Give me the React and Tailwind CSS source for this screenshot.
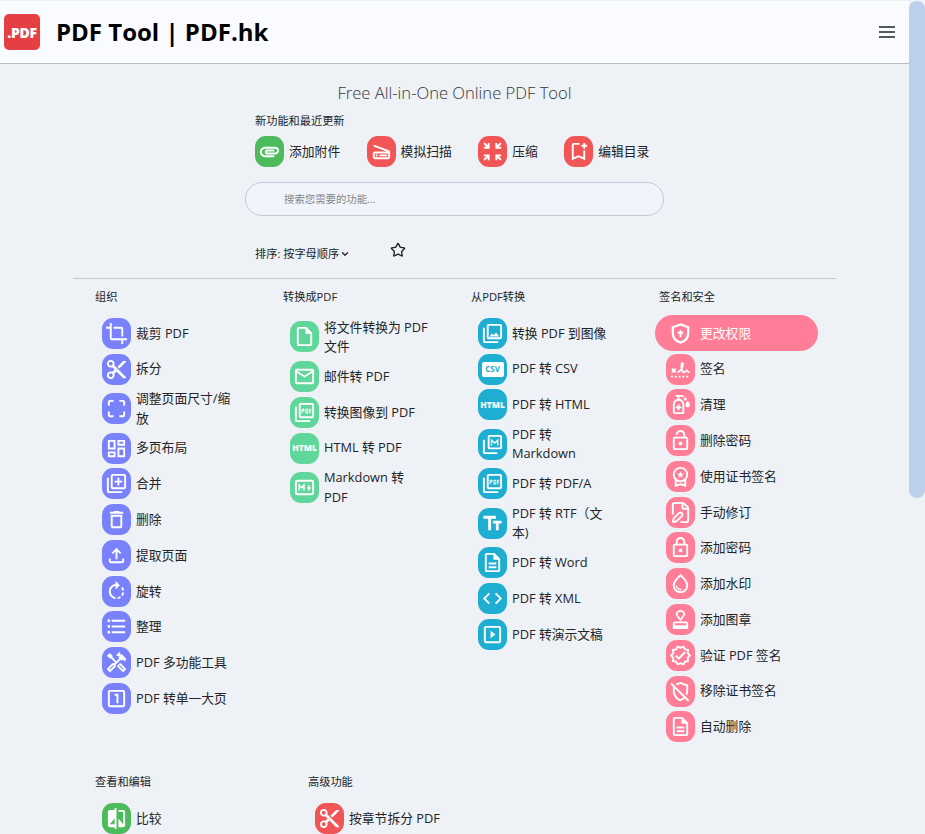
import React from "react";
import {
  MdAttachment, MdOutlineScanner, MdOutlineZoomInMap, MdOutlineBookmarkAdd,
  MdCrop, MdContentCut, MdOutlineCropFree, MdOutlineDashboard, MdOutlineLibraryAdd, MdOutlineDelete,
  MdOutlineFileUpload, MdRotateRight, MdOutlineFormatListBulleted, MdOutlineHandyman, MdOutlineLooksOne,
  MdOutlineInsertDriveFile, MdOutlineEmail, MdOutlinePictureAsPdf,
  MdOutlinePhotoLibrary, MdOutlineTextFields, MdOutlineDescription, MdOutlineCode, MdOutlineSlideshow,
  MdOutlineSanitizer, MdOutlineLockOpen, MdOutlineWorkspacePremium, MdOutlineLock, MdOutlineWaterDrop,
  MdOutlineApproval, MdOutlineVerified, MdOutlineRemoveModerator, MdCompare,
} from "react-icons/md";
import { FilePen, Star, ChevronDown } from "lucide-react";

const ShieldUp = ({ size }) => (
  <svg width={size} height={size} viewBox="0 0 24 24" fill="none" stroke="currentColor" strokeWidth="2.4">
    <path d="M12 2.500l8 3v6c0 4.800-3.400 8.600-8 10-4.600-1.400-8-5.200-8-10v-6z" />
    <path d="M12 16v-6M9.500 12.200L12 9.500l2.500 2.700" strokeWidth="2" />
  </svg>
);

const Signature = ({ size }) => (
  <svg width={size} height={size} viewBox="0 0 24 24" fill="none" stroke="currentColor" strokeWidth="1.800">
    <path d="M3 11l4 4M7 11l-4 4" />
    <path d="M9 15c2-1 5-4 5.500-7.500C15 5 13.500 4 13 6.500c-.5 3 .5 8.500 2.500 8.500 1.500 0 1.500-2 3-2 1 0 1 2 3 2" />
    <path d="M2 19.500h20" strokeDasharray="2 2" />
  </svg>
);

const MarkdownBox = ({ size }) => (
  <svg width={size} height={size} viewBox="0 0 24 24" fill="none" stroke="currentColor" strokeWidth="2">
    <rect x="3" y="5" width="18" height="14" rx="1.500" />
    <path d="M6.500 15V9.500l2.500 3 2.500-3V15" strokeWidth="1.500" />
    <path d="M16.500 9.500V15M14.500 12.500h4" strokeWidth="1.500" />
  </svg>
);

const StackedM = ({ size }) => (
  <svg width={size} height={size} viewBox="0 0 24 24" fill="none" stroke="currentColor" strokeWidth="2">
    <rect x="8" y="3" width="13" height="13" rx="1" />
    <path d="M3 7v13a1 1 0 001 1h13" />
    <path d="M11 13V7.500l3.500 3 3-3V13" strokeWidth="1.400" />
  </svg>
);

const CsvBox = () => (
  <span className="flex h-[15px] w-[22px] items-center justify-center rounded-[2px] bg-white text-[8px] font-bold leading-none text-[#1eaed2]">
    CSV
  </span>
);

const HtmlWord = () => <span className="text-[8.5px] font-extrabold leading-none">HTML</span>;

const ORGANIZE = [
  { label: "裁剪 PDF", Icon: MdCrop },
  { label: "拆分", Icon: MdContentCut },
  { label: "调整页面尺寸/缩放", Icon: MdOutlineCropFree },
  { label: "多页布局", Icon: MdOutlineDashboard },
  { label: "合并", Icon: MdOutlineLibraryAdd },
  { label: "删除", Icon: MdOutlineDelete },
  { label: "提取页面", Icon: MdOutlineFileUpload },
  { label: "旋转", Icon: MdRotateRight },
  { label: "整理", Icon: MdOutlineFormatListBulleted },
  { label: "PDF 多功能工具", Icon: MdOutlineHandyman },
  { label: "PDF 转单一大页", Icon: MdOutlineLooksOne },
];

const TO_PDF = [
  { label: "将文件转换为 PDF 文件", Icon: MdOutlineInsertDriveFile },
  { label: "邮件转 PDF", Icon: MdOutlineEmail },
  { label: "转换图像到 PDF", Icon: MdOutlinePictureAsPdf },
  { label: "HTML 转 PDF", Icon: HtmlWord },
  { label: "Markdown 转 PDF", Icon: MarkdownBox },
];

const FROM_PDF = [
  { label: "转换 PDF 到图像", Icon: MdOutlinePhotoLibrary },
  { label: "PDF 转 CSV", Icon: CsvBox },
  { label: "PDF 转 HTML", Icon: HtmlWord },
  { label: "PDF 转 Markdown", Icon: StackedM },
  { label: "PDF 转 PDF/A", Icon: MdOutlinePictureAsPdf },
  { label: "PDF 转 RTF（文本)", Icon: MdOutlineTextFields },
  { label: "PDF 转 Word", Icon: MdOutlineDescription },
  { label: "PDF 转 XML", Icon: MdOutlineCode },
  { label: "PDF 转演示文稿", Icon: MdOutlineSlideshow },
];

const SECURITY = [
  { label: "更改权限", Icon: ShieldUp, active: true },
  { label: "签名", Icon: Signature },
  { label: "清理", Icon: MdOutlineSanitizer },
  { label: "删除密码", Icon: MdOutlineLockOpen },
  { label: "使用证书签名", Icon: MdOutlineWorkspacePremium },
  { label: "手动修订", Icon: FilePen },
  { label: "添加密码", Icon: MdOutlineLock },
  { label: "添加水印", Icon: MdOutlineWaterDrop },
  { label: "添加图章", Icon: MdOutlineApproval },
  { label: "验证 PDF 签名", Icon: MdOutlineVerified },
  { label: "移除证书签名", Icon: MdOutlineRemoveModerator },
  { label: "自动删除", Icon: MdOutlineDescription },
];

const RECENT = [
  { label: "添加附件", Icon: MdAttachment, tile: "bg-[#4cbb5b]" },
  { label: "模拟扫描", Icon: MdOutlineScanner, tile: "bg-[#f15555]" },
  { label: "压缩", Icon: MdOutlineZoomInMap, tile: "bg-[#f15555]" },
  { label: "编辑目录", Icon: MdOutlineBookmarkAdd, tile: "bg-[#f15555]" },
];

function Tile({ Icon, tile, size = 23 }) {
  return (
    <span className={"flex h-[31px] w-[29px] shrink-0 items-center justify-center rounded-[11px] text-white " + tile}>
      <Icon size={size} />
    </span>
  );
}

function ToolRow({ item, tile }) {
  const { label, Icon, active, size } = item;
  return (
    <div className={"flex w-[163px] items-center gap-[5px] rounded-full py-[2.4px] pl-[11px] pr-[12px] " + (active ? "bg-[#ff7d96] text-white" : "text-[#212529]")}>
      <Tile Icon={Icon} tile={tile} size={size} />
      <span className="min-w-0 flex-1 text-[12.8px] leading-[19.2px]">{label}</span>
    </div>
  );
}

function Group({ title, items, tile, width }) {
  return (
    <div className={"shrink-0 " + width}>
      <div className="pl-1 text-[11.2px] leading-[16.8px] text-[#212529]">{title}</div>
      <div className="mt-[10px] flex flex-col">
        {items.map((item) => (
          <ToolRow key={item.label} item={item} tile={tile} />
        ))}
      </div>
    </div>
  );
}

export default function App() {
  return (
    <div className="flex h-[834px] overflow-hidden bg-[#eef1f5] font-['Open_Sans','Noto_Sans_CJK_SC',sans-serif] text-[#212529]">
      <div className="min-w-0 flex-1">
        <nav className="mt-px flex h-[63px] items-center justify-between border-b border-[#b9bcc2] bg-[#fafbfe] pl-[4px] pr-[12px]">
          <div className="flex items-center gap-[16px]">
            <span className="flex h-[36px] w-[36px] items-center justify-center rounded-[5px] bg-[#e53e43] text-[14px] font-extrabold tracking-[-0.3px] text-white">
              .PDF
            </span>
            <span className="text-[24px] font-bold leading-none text-black">PDF Tool | PDF.hk</span>
          </div>
          <svg width="18" height="14" viewBox="0 0 18 14" fill="none" stroke="#555a60" strokeWidth="2" className="mr-[1px]">
            <path d="M1 2h16M1 7h16M1 12h16" />
          </svg>
        </nav>

        <div className="pt-[17px] text-center text-[16.6px] font-light leading-6 text-[#33373b]">Free All-in-One Online PDF Tool</div>

        <div className="mx-auto mt-[8px] w-[419px]">
          <div className="pl-[10px] text-[11.2px] leading-[16.8px]">新功能和最近更新</div>
          <div className="mt-[6px] flex gap-[26.4px] pl-[10px]">
            {RECENT.map(({ label, Icon, tile }) => (
              <div key={label} className="flex items-center gap-[5px]">
                <Tile Icon={Icon} tile={tile} />
                <span className="text-[12.8px] leading-[19.2px]">{label}</span>
              </div>
            ))}
          </div>
          <input
            className="mt-[15px] block h-[34px] w-full rounded-full border border-[#c3c9da] bg-[#f1f4fb] pl-[38px] text-[10.4px] outline-none placeholder:text-[#80858e]"
            placeholder="搜索您需要的功能..."
          />
          <div className="mt-[30px] flex items-center pl-[10px]">
            <span className="flex w-[135px] items-center text-[11.2px] leading-[16.8px]">
              排序: 按字母顺序
              <ChevronDown size={10} strokeWidth={3} className="ml-px" />
            </span>
            <Star size={16} strokeWidth={2} className="-mt-[8px] text-[#1c1f23]" />
          </div>
        </div>

        <div className="mx-[73px] mt-[15px] border-t border-[#c4c7cb]" />

        <div className="ml-[91px] mt-[10px] flex">
          <Group title="组织" items={ORGANIZE} tile="bg-[#7a82fb]" width="w-[188px]" />
          <Group title="转换成PDF" items={TO_PDF} tile="bg-[#5fd79a]" width="w-[188px]" />
          <Group title="从PDF转换" items={FROM_PDF} tile="bg-[#1eaed2]" width="w-[188px]" />
          <Group title="签名和安全" items={SECURITY} tile="bg-[#ff7d96]" width="w-[188px]" />
        </div>

        <div className="ml-[91px] mt-[29px] flex">
          <Group title="查看和编辑" items={[{ label: "比较", Icon: MdCompare }]} tile="bg-[#4cbb5b]" width="w-[213px]" />
          <Group title="高级功能" items={[{ label: "按章节拆分 PDF", Icon: MdContentCut }]} tile="bg-[#f15555]" width="w-[213px]" />
        </div>
      </div>

      <div className="w-[16px] shrink-0">
        <div className="mt-px h-[497px] rounded-[8px] bg-[#bbd0ea]" />
      </div>
    </div>
  );
}
